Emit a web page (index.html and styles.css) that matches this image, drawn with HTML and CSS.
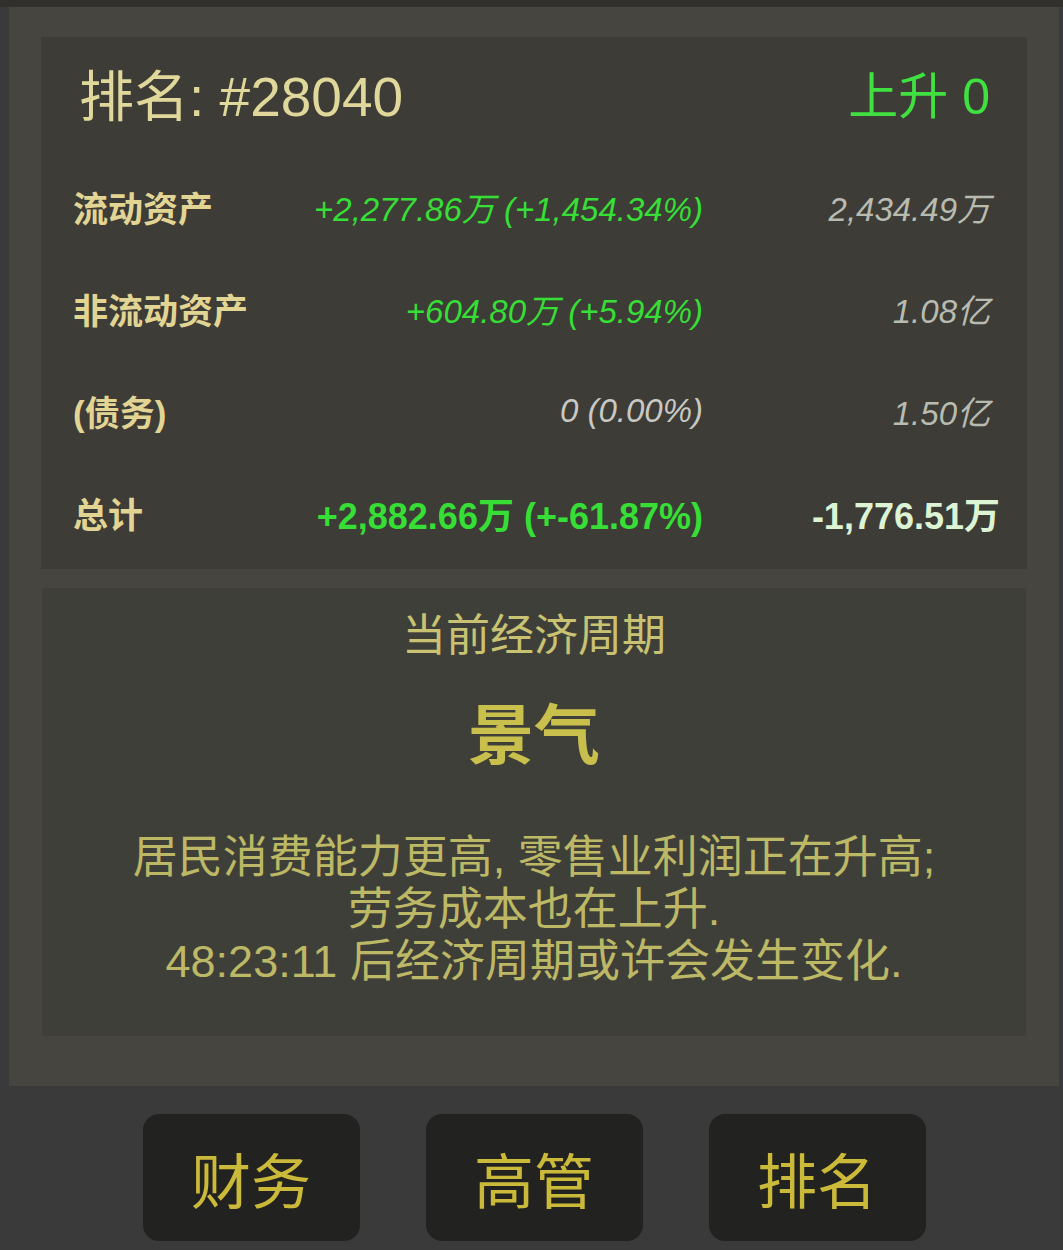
FILE: index.html
```html
<!DOCTYPE html>
<html lang="zh-CN">
<head>
<meta charset="utf-8">
<link rel="stylesheet" href="styles.css">
</head>
<body>
<div class="topbar"></div>
<div class="main">
  <div class="panel">
    <section class="card rank">
      <div class="rank-head">
        <span class="rank-title">排名: #28040</span>
        <span class="rank-change">上升 0</span>
      </div>
      <div class="row">
        <span class="label">流动资产</span>
        <span class="delta up">+2,277.86万 (+1,454.34%)</span>
        <span class="value">2,434.49万</span>
      </div>
      <div class="row">
        <span class="label">非流动资产</span>
        <span class="delta up">+604.80万 (+5.94%)</span>
        <span class="value">1.08亿</span>
      </div>
      <div class="row">
        <span class="label">(债务)</span>
        <span class="delta zero">0 (0.00%)</span>
        <span class="value">1.50亿</span>
      </div>
      <div class="row total">
        <span class="label">总计</span>
        <span class="delta up">+2,882.66万 (+-61.87%)</span>
        <span class="value">-1,776.51万</span>
      </div>
    </section>
    <section class="card cycle">
      <div class="cycle-title">当前经济周期</div>
      <div class="cycle-name">景气</div>
      <div class="cycle-desc">居民消费能力更高, 零售业利润正在升高;<br>劳务成本也在上升.<br>48:23:11 后经济周期或许会发生变化.</div>
    </section>
  </div>
</div>
<nav class="tabs">
  <button class="tab">财务</button>
  <button class="tab">高管</button>
  <button class="tab">排名</button>
</nav>
</body>
</html>
```
FILE: styles.css
```css
* { box-sizing: border-box; }
html, body { margin: 0; padding: 0; }
body {
  width: 1063px;
  height: 1250px;
  background: #3a3a3a;
  font-family: "Liberation Sans", "Noto Sans CJK SC", sans-serif;
  overflow: hidden;
}
.topbar {
  height: 7px;
  background: #31302d;
}
.main {
  display: flex;
  background: #3a3a3c;
  padding: 0 4px 0 9px;
}
.panel {
  flex: 1;
  background: #46453f;
  padding: 30px 32px 50px 32px;
  display: flex;
  flex-direction: column;
  gap: 19px;
}
.card.rank {
  background: #3d3c37;
  padding: 0 37px 4px 32px;
}
.rank-head {
  height: 120px;
  display: flex;
  align-items: center;
  justify-content: space-between;
  padding: 0 0 10px 6px;
}
.rank-title {
  font-size: 55px;
  color: #e0d79a;
}
.rank-change {
  font-size: 50px;
  color: #3fe03f;
}
.row {
  height: 102px;
  display: grid;
  grid-template-columns: 230px 400px 1fr;
  align-items: center;
  padding-bottom: 3px;
}
.label {
  font-size: 35px;
  font-weight: bold;
  color: #e2d594;
}
.delta, .value {
  text-align: right;
  font-size: 33px;
  font-style: italic;
}
.delta.up { color: #36de36; }
.delta.zero { color: #c8c8c4; }
.value { color: #b8bbb0; }
.row.total .delta, .row.total .value {
  font-style: normal;
  font-weight: bold;
  font-size: 36px;
}
.row.total .value {
  color: #dcf3d4;
  margin-right: -10px;
}
.card.cycle {
  background: #3f3f39;
  margin: 0 1px;
  padding: 20px 20px 48px;
  text-align: center;
  display: flex;
  flex-direction: column;
  align-items: center;
}
.cycle-title {
  font-size: 44px;
  color: #c9c273;
  line-height: 56px;
}
.cycle-name {
  font-size: 66px;
  font-weight: bold;
  color: #c9bf4d;
  line-height: 80px;
  margin-top: 32px;
}
.cycle-desc {
  font-size: 45px;
  color: #bcb865;
  line-height: 52px;
  margin-top: 56px;
}
.tabs {
  display: flex;
  justify-content: center;
  gap: 66px;
  padding: 28px 0 0 0;
  margin-left: 5px;
}
.tab {
  width: 217px;
  height: 127px;
  border: none;
  border-radius: 16px;
  background: #222221;
  color: #cbb93a;
  font-family: "Liberation Sans", "Noto Sans CJK SC", sans-serif;
  font-size: 60px;
  padding: 0;
}
```
